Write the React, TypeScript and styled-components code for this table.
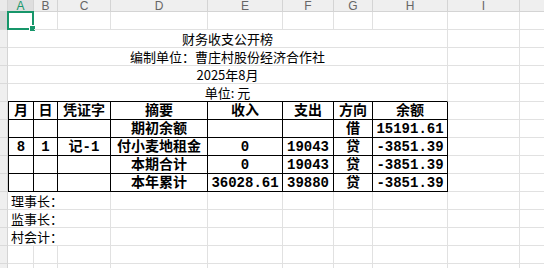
import styled, { createGlobalStyle } from 'styled-components';

const GlobalStyle = createGlobalStyle`
  html, body {
    margin: 0;
    padding: 0;
    background: #fff;
    overflow: hidden;
  }
`;

const COLS = [26, 24, 53, 97, 75, 51, 39, 75, 72, 72];
const LETTERS = ['A', 'B', 'C', 'D', 'E', 'F', 'G', 'H', 'I', 'J'];
const GRID = '#e1e1e1';
const GREEN = '#17966a';

type Kind = 'plain' | 'title' | 'th' | 'td' | 'note';

interface CellSpec {
  t?: string;
  span?: number;
  kind?: Kind;
  box?: boolean;
  edge?: boolean;
  under?: boolean;
}

const Viewport = styled.div`
  width: 544px;
  height: 268px;
  overflow: hidden;
`;

const Sheet = styled.div`
  display: grid;
  grid-template-columns: 8px ${COLS.map((c) => c + 'px').join(' ')};
  grid-template-rows: 12px;
  grid-auto-rows: 18px;
  width: max-content;
`;

const Corner = styled.div`
  background: #eaeaea;
  border-right: 1px solid #d4d4d4;
  border-bottom: 1px solid #d4d4d4;
  box-sizing: border-box;
`;

const ColHead = styled.div<{ $active?: boolean }>`
  display: flex;
  align-items: center;
  justify-content: center;
  box-sizing: border-box;
  background: ${(p) => (p.$active ? '#dedede' : '#efefef')};
  border-right: 1px solid #d4d4d4;
  border-bottom: 1px solid #d4d4d4;
  color: ${(p) => (p.$active ? GREEN : '#666')};
  font-family: 'Liberation Sans', Arial, sans-serif;
  font-size: 12px;
  line-height: 12px;
  overflow: hidden;
`;

const RowHead = styled.div<{ $active?: boolean }>`
  box-sizing: border-box;
  background: ${(p) => (p.$active ? '#d6d6d6' : '#efefef')};
  border-right: 1px solid #d4d4d4;
  border-bottom: 1px solid #dadada;
`;

const Cell = styled.div<{
  $span: number;
  $kind: Kind;
  $box?: boolean;
  $edge?: boolean;
  $under?: boolean;
}>`
  grid-column: span ${(p) => p.$span};
  position: relative;
  display: flex;
  align-items: center;
  justify-content: ${(p) => (p.$kind === 'note' ? 'flex-start' : 'center')};
  padding-left: ${(p) => (p.$kind === 'note' ? '3px' : '0')};
  box-sizing: border-box;
  border-right: 1px solid ${(p) => (p.$box ? '#000' : GRID)};
  border-bottom: 1px solid ${(p) => (p.$box || p.$under ? '#000' : GRID)};
  border-left: ${(p) => (p.$edge ? '1px solid #000' : '0')};
  white-space: pre;
  color: #000;
  font-family: ${(p) =>
    p.$kind === 'td' || p.$kind === 'th'
      ? "'Liberation Mono', 'Noto Sans CJK SC', monospace"
      : "'Noto Sans CJK SC', 'Liberation Sans', sans-serif"};
  font-weight: ${(p) => (p.$kind === 'td' || p.$kind === 'th' ? 700 : 400)};
  font-size: ${(p) => (p.$kind === 'td' || p.$kind === 'th' ? '14px' : '13px')};
  line-height: 16px;
`;

const Selection = styled.div`
  position: absolute;
  left: -1px;
  top: -1px;
  right: -1px;
  bottom: -1px;
  border: 2px solid ${GREEN};
  pointer-events: none;
`;

const Handle = styled.div`
  position: absolute;
  right: -4px;
  bottom: -4px;
  width: 5px;
  height: 5px;
  background: ${GREEN};
  border: 1px solid #fff;
`;

const empties = (n: number): CellSpec[] => Array.from({ length: n }, () => ({}));

const merged = (t: string, under = false): CellSpec[] => [
  { t, span: 8, kind: 'title', under },
  ...empties(2),
];

const tableRow = (vals: string[], kind: Kind): CellSpec[] => [
  ...vals.map((t, i) => ({ t, kind, box: true, edge: i === 0 })),
  ...empties(2),
];

const note = (t: string): CellSpec[] => [{ t, span: 3, kind: 'note' }, ...empties(7)];

const rows: CellSpec[][] = [
  empties(10),
  merged('财务收支公开榜'),
  merged('编制单位：曹庄村股份经济合作社'),
  merged('2025年8月'),
  merged('单位: 元', true),
  tableRow(['月', '日', '凭证字', '摘要', '收入', '支出', '方向', '余额'], 'th'),
  tableRow(['', '', '', '期初余额', '', '', '借', '15191.61'], 'td'),
  tableRow(['8', '1', '记-1', '付小麦地租金', '0', '19043', '贷', '-3851.39'], 'td'),
  tableRow(['', '', '', '本期合计', '0', '19043', '贷', '-3851.39'], 'td'),
  tableRow(['', '', '', '本年累计', '36028.61', '39880', '贷', '-3851.39'], 'td'),
  note('理事长：'),
  note('监事长：'),
  note('村会计：'),
  empties(10),
  empties(10),
];

const App = () => {
  return (
    <Viewport>
      <GlobalStyle />
      <Sheet>
        <Corner />
        {LETTERS.map((l, i) => (
          <ColHead key={l} $active={i === 0}>
            {i < LETTERS.length - 1 ? l : ''}
          </ColHead>
        ))}
        {rows.map((row, r) => [
          <RowHead key={`h${r}`} $active={r === 0} />,
          ...row.map((c, i) => (
            <Cell
              key={`${r}-${i}`}
              $span={c.span ?? 1}
              $kind={c.kind ?? 'plain'}
              $box={c.box}
              $edge={c.edge}
              $under={c.under}
            >
              {c.t}
              {r === 0 && i === 0 && (
                <Selection>
                  <Handle />
                </Selection>
              )}
            </Cell>
          )),
        ])}
      </Sheet>
    </Viewport>
  );
};

export default App;
